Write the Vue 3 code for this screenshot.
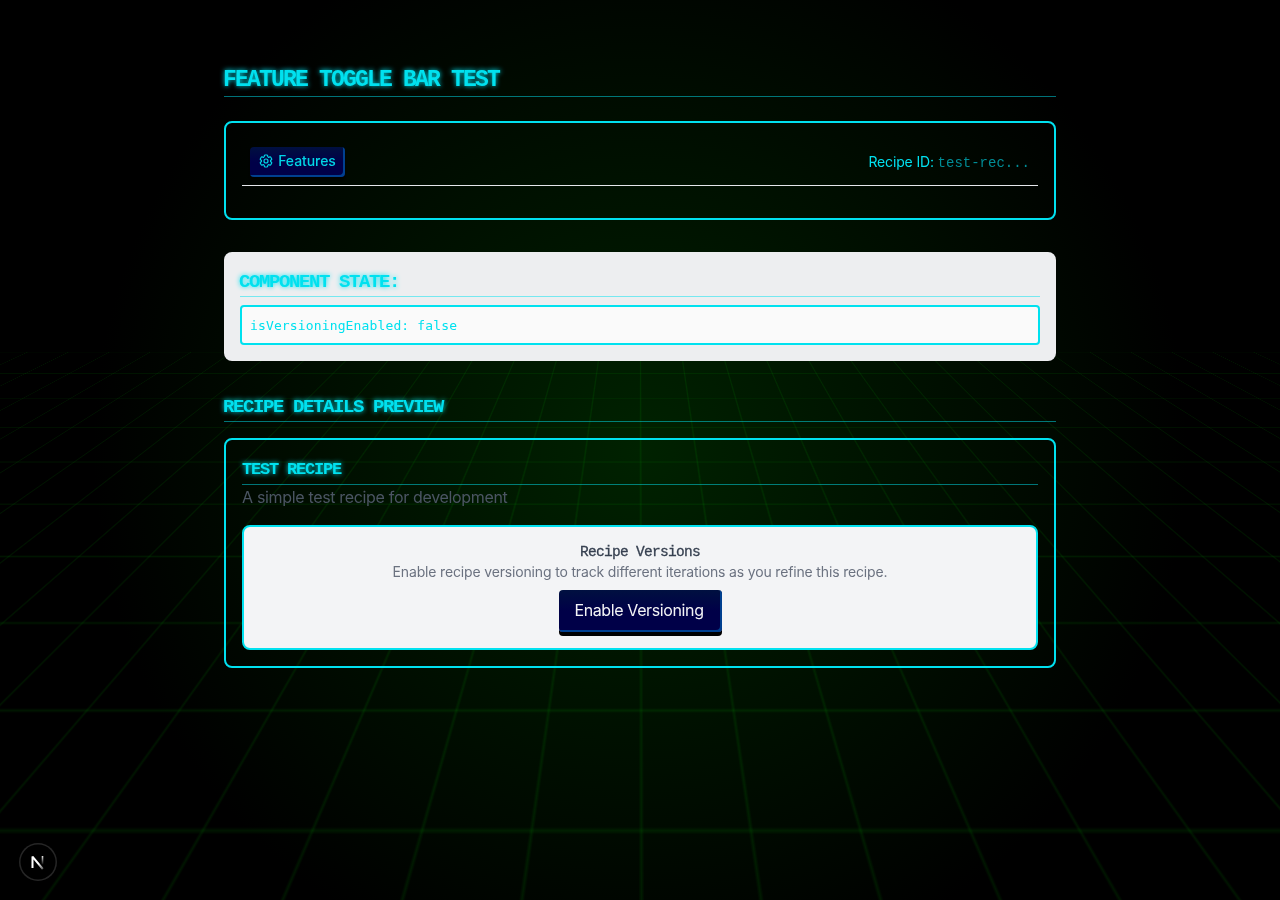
<script setup>
const state = [{ key: 'isVersioningEnabled', value: false }]
const recipe = {
  name: 'Test Recipe',
  description: 'A simple test recipe for development',
  shortId: 'test-rec...',
}
</script>

<template>
  <div class="screen">
    <div class="grid-floor"></div>
    <main class="content">
      <h1>Feature Toggle Bar Test</h1>

      <section class="card toolbar-card">
        <div class="toolbar">
          <button class="btn small">
            <svg viewBox="0 0 24 24" width="16" height="16" fill="none" stroke="currentColor" stroke-width="1.800" stroke-linecap="round" stroke-linejoin="round">
              <path d="M9.594 3.94c.09-.542.56-.94 1.11-.94h2.593c.55 0 1.02.398 1.11.94l.213 1.281c.063.374.313.686.645.87.074.04.147.083.22.127.325.196.72.257 1.075.124l1.217-.456a1.125 1.125 0 0 1 1.37.49l1.296 2.247a1.125 1.125 0 0 1-.26 1.431l-1.003.827c-.293.241-.438.613-.43.992a7.723 7.723 0 0 1 0 .255c-.008.378.137.75.43.991l1.004.827c.424.35.534.955.26 1.43l-1.298 2.247a1.125 1.125 0 0 1-1.369.491l-1.217-.456c-.355-.133-.75-.072-1.076.124a6.47 6.47 0 0 1-.22.128c-.331.183-.581.495-.644.869l-.213 1.281c-.09.543-.56.94-1.11.94h-2.594c-.55 0-1.019-.398-1.11-.94l-.213-1.281c-.062-.374-.312-.686-.644-.87a6.52 6.52 0 0 1-.22-.127c-.325-.196-.72-.257-1.076-.124l-1.217.456a1.125 1.125 0 0 1-1.369-.49l-1.297-2.247a1.125 1.125 0 0 1 .26-1.431l1.004-.827c.292-.24.437-.613.43-.991a6.932 6.932 0 0 1 0-.255c.007-.38-.138-.751-.43-.992l-1.004-.827a1.125 1.125 0 0 1-.26-1.43l1.297-2.247a1.125 1.125 0 0 1 1.37-.491l1.216.456c.356.133.751.072 1.076-.124.072-.044.146-.086.22-.128.332-.183.582-.495.644-.869l.214-1.28Z" />
              <circle cx="12" cy="12" r="3" />
            </svg>
            <span>Features</span>
          </button>
          <div class="recipe-id">Recipe ID: <code>{{ recipe.shortId }}</code></div>
        </div>
      </section>

      <section class="state">
        <h3>Component State:</h3>
        <pre v-for="s in state" :key="s.key">{{ s.key }}: {{ s.value }}</pre>
      </section>

      <h2>Recipe Details Preview</h2>

      <section class="card details">
        <h4>{{ recipe.name }}</h4>
        <p class="description">{{ recipe.description }}</p>
        <div class="versions">
          <h5>Recipe Versions</h5>
          <p>Enable recipe versioning to track different iterations as you refine this recipe.</p>
          <button class="btn large">Enable Versioning</button>
        </div>
      </section>
    </main>

    <div class="dev-badge">
      <svg width="38" height="38" viewBox="0 0 38 38" fill="none">
        <defs>
          <linearGradient id="stem" x1="0" y1="12" x2="0" y2="22" gradientUnits="userSpaceOnUse">
            <stop offset="0" stop-color="#fff" />
            <stop offset="1" stop-color="#fff" stop-opacity="0" />
          </linearGradient>
          <linearGradient id="diag" x1="20" y1="20" x2="25" y2="26" gradientUnits="userSpaceOnUse">
            <stop offset="0" stop-color="#fff" />
            <stop offset="1" stop-color="#fff" stop-opacity="0.3" />
          </linearGradient>
        </defs>
        <path d="M13.500 25V13.600L23.800 26" stroke="url(#diag)" stroke-width="2" stroke-linejoin="bevel" />
        <path d="M23.500 13V21.500" stroke="url(#stem)" stroke-width="1.600" />
      </svg>
    </div>
  </div>
</template>

<style>
body {
  background: #000;
}
</style>

<style scoped>
* {
  box-sizing: border-box;
  margin: 0;
  padding: 0;
}

.screen {
  position: relative;
  height: 900px;
  overflow: hidden;
  background: radial-gradient(circle at center, #002200 0%, #000 70%);
  color: #00e1ef;
  font-family: Inter, sans-serif;
}

.grid-floor {
  position: absolute;
  left: -360px;
  top: 358.300px;
  width: 2000px;
  height: 390px;
  background-image:
    linear-gradient(rgba(0, 255, 0, 0.1) 1px, transparent 1px),
    linear-gradient(90deg, rgba(0, 255, 0, 0.1) 1px, transparent 1px);
  background-size: 40px 40px;
  transform: perspective(516px) rotateX(61.660deg);
  transform-origin: 50% -11.900px;
  opacity: 0.8;
}

.content {
  position: relative;
  width: 832px;
  margin: 0 auto;
  padding-top: 64px;
}

h1,
h2,
h3,
h4 {
  font-family: "Liberation Mono", monospace;
  font-weight: 700;
  text-transform: uppercase;
  text-indent: -1px;
  text-shadow: 0 0 5px #00e1ef;
  border-bottom: 1px solid rgba(0, 225, 239, 0.5);
  white-space: nowrap;
}

h1 {
  height: 33px;
  font-size: 23px;
  line-height: 32px;
  letter-spacing: -1.800px;
}

h2,
h3 {
  height: 29px;
  font-size: 19px;
  line-height: 28px;
  letter-spacing: -1.400px;
}

h4 {
  height: 29px;
  font-size: 17px;
  line-height: 28px;
  letter-spacing: -1.200px;
  text-indent: 0;
}

.card {
  border: 2px solid #00e1ef;
  border-radius: 8px;
  padding: 16px;
}

.toolbar-card {
  height: 99px;
  margin-top: 24px;
}

.toolbar {
  display: flex;
  align-items: center;
  justify-content: space-between;
  height: 47px;
  padding: 8px;
  border-bottom: 1px solid #e5e7eb;
}

.btn {
  display: inline-flex;
  align-items: center;
  justify-content: center;
  border: 0;
  border-radius: 4px;
  background: linear-gradient(#001040, #000048 50%);
  font-family: inherit;
  white-space: nowrap;
}

.small {
  width: 95px;
  height: 30px;
  padding: 0 1px 3px 0;
  gap: 4px;
  color: #00d5e6;
  font-size: 14px;
  font-weight: 500;
  letter-spacing: -0.060px;
  box-shadow: inset -2px -2px 0 #004090, 0 3px 2px rgba(0, 0, 0, 0.6);
}

.small svg {
  margin-top: 1px;
}

.recipe-id {
  font-size: 14px;
  letter-spacing: -0.160px;
  white-space: nowrap;
}

.recipe-id code {
  font-family: "Liberation Mono", monospace;
  font-size: 14px;
  letter-spacing: 0;
  color: #008d96;
}

.state {
  height: 109px;
  margin-top: 32px;
  padding: 16px;
  border-radius: 8px;
  background: #edeef0;
}

pre {
  height: 40px;
  margin-top: 8px;
  padding: 0 8px;
  border: 2px solid #00e1ef;
  border-radius: 4px;
  background: #fafafa;
  font-family: "DejaVu Sans Mono", monospace;
  font-size: 13px;
  line-height: 37px;
  letter-spacing: 0.140px;
}

h2 {
  margin-top: 32px;
}

.details {
  height: 230px;
  margin-top: 16px;
}

.description {
  height: 24px;
  font-size: 16px;
  line-height: 24px;
  letter-spacing: -0.330px;
  color: #4b5563;
}

.versions {
  display: flex;
  flex-direction: column;
  align-items: center;
  height: 125px;
  margin-top: 16px;
  padding-top: 16px;
  border: 2px solid #00e1ef;
  border-radius: 8px;
  background: #f3f4f6;
}

h5 {
  height: 19px;
  font-family: "Liberation Mono", monospace;
  font-size: 14.500px;
  font-weight: 400;
  line-height: 19px;
  letter-spacing: -0.700px;
  color: #374151;
  -webkit-text-stroke: 0.300px #374151;
}

.versions p {
  font-size: 14px;
  line-height: 20px;
  letter-spacing: -0.160px;
  color: #6b7280;
}

.large {
  width: 163px;
  height: 42px;
  margin-top: 8px;
  padding: 0 2px 2px 0;
  color: #f3f4f6;
  font-size: 16px;
  letter-spacing: -0.380px;
  box-shadow: inset -2px -2px 0 #004090, 0 4px 0 #000;
}

.dev-badge {
  position: absolute;
  left: 19px;
  top: 843px;
  width: 38px;
  height: 38px;
  border-radius: 50%;
  background: #000;
  box-shadow: inset 0 0 0 1.500px #262626;
}
</style>
